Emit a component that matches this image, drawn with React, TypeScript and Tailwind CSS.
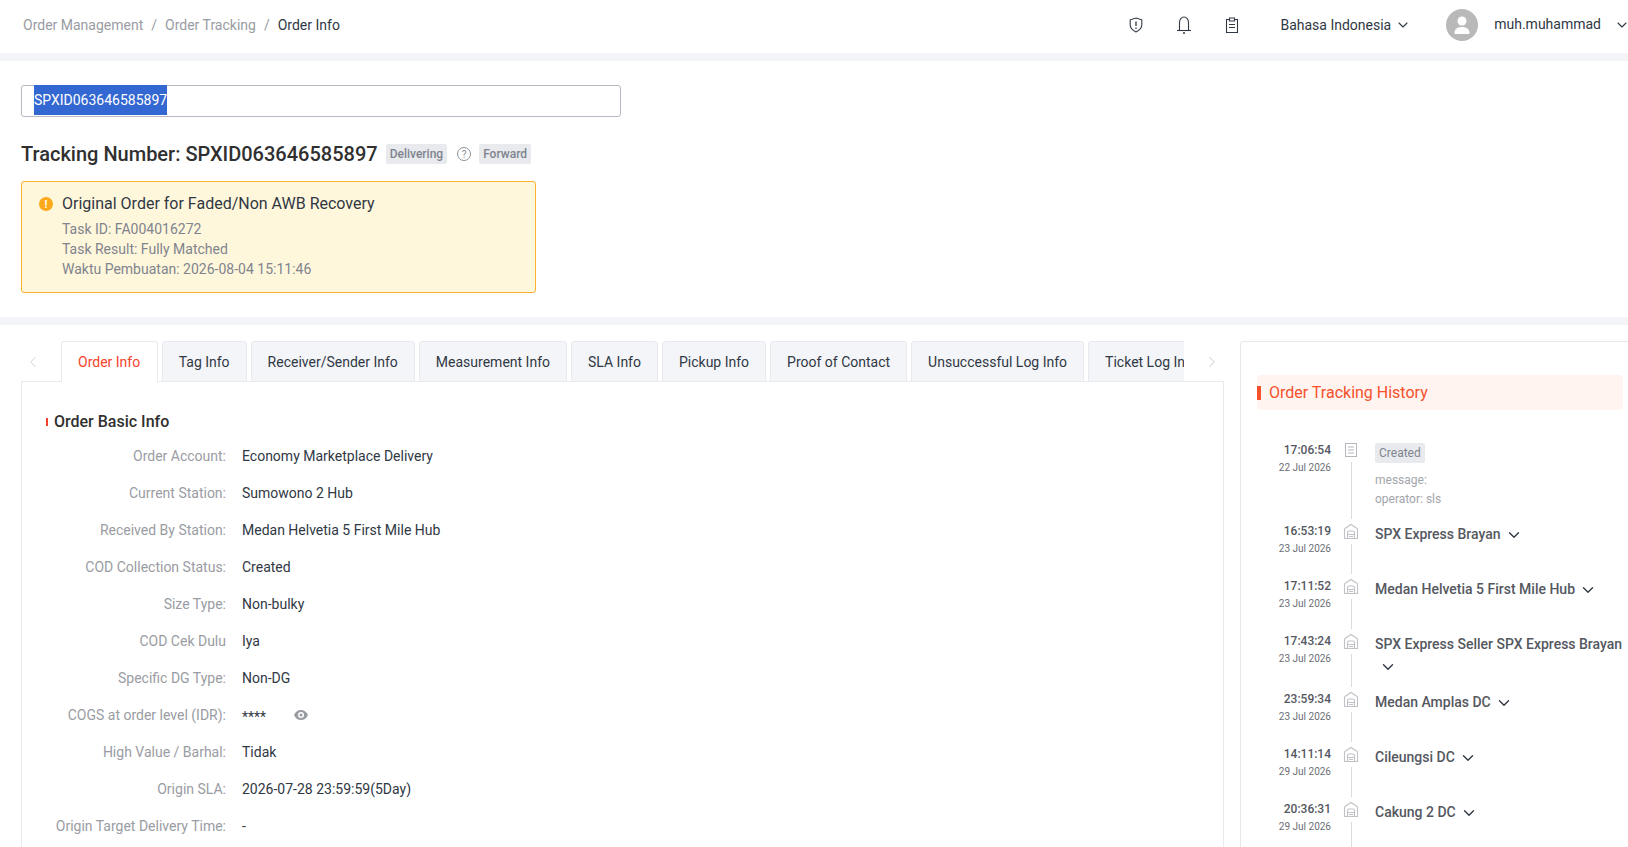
import React from "react";
import { ChevronDown, ChevronLeft, ChevronRight } from "lucide-react";

const tabs = [
  "Tag Info",
  "Receiver/Sender Info",
  "Measurement Info",
  "SLA Info",
  "Pickup Info",
  "Proof of Contact",
  "Unsuccessful Log Info",
  "Ticket Log Info",
];

const basicInfo = [
  ["Order Account:", "Economy Marketplace Delivery"],
  ["Current Station:", "Sumowono 2 Hub"],
  ["Received By Station:", "Medan Helvetia 5 First Mile Hub"],
  ["COD Collection Status:", "Created"],
  ["Size Type:", "Non-bulky"],
  ["COD Cek Dulu", "Iya"],
  ["Specific DG Type:", "Non-DG"],
  ["COGS at order level (IDR):", "****"],
  ["High Value / Barhal:", "Tidak"],
  ["Origin SLA:", "2026-07-28 23:59:59(5Day)"],
  ["Origin Target Delivery Time:", "-"],
];

const history = [
  { time: "16:53:19", date: "23 Jul 2026", name: "SPX Express Brayan", rowClass: "h-[55px]" },
  { time: "17:11:52", date: "23 Jul 2026", name: "Medan Helvetia 5 First Mile Hub", rowClass: "h-[55px]" },
  { time: "17:43:24", date: "23 Jul 2026", name: "SPX Express Seller SPX Express Brayan", rowClass: "h-[58px]" },
  { time: "23:59:34", date: "23 Jul 2026", name: "Medan Amplas DC", rowClass: "h-[55px]" },
  { time: "14:11:14", date: "29 Jul 2026", name: "Cileungsi DC", rowClass: "h-[55px]" },
  { time: "20:36:31", date: "29 Jul 2026", name: "Cakung 2 DC", rowClass: "h-[55px]" },
];

const ShieldIcon = () => (
  <svg width="14" height="16" viewBox="0 0 14 16" fill="none" stroke="#303844" strokeWidth="1.100">
    <path d="M7 1l5.800 1.800v5c0 3.200-2.500 5.600-5.800 7.200-3.300-1.600-5.800-4-5.800-7.200v-5z" />
    <path d="M7 4.500v4.500M7 10.500v1.500" strokeWidth="1.300" />
  </svg>
);

const BellIcon = () => (
  <svg width="16" height="18" viewBox="0 0 16 18" fill="none" stroke="#303844" strokeWidth="1.100" className="ml-[33px]">
    <path d="M3.500 14V6.500C3.500 3.500 5.500 1 8 1s4.500 2.500 4.500 5.500V14" />
    <path d="M1 14.500h14" />
    <path d="M7 17h2" strokeWidth="1.500" />
  </svg>
);

const ClipboardIcon = () => (
  <svg width="14" height="16" viewBox="0 0 14 16" fill="none" stroke="#303844" strokeWidth="1.100" className="ml-[33px]">
    <path d="M4.500 2.500h-3v13h11v-13h-3" />
    <path d="M4.500 1h5v3h-5z" />
    <path d="M4 7.500h6M4 10.500h6" />
  </svg>
);

const HubIcon = () => (
  <svg width="16" height="17" viewBox="0 0 16 17" fill="none" stroke="#c0c2c7" strokeWidth="1.100">
    <path d="M1.500 15.500V6.500c0-.6.200-1 .7-1.300L8 1.500l5.800 3.700c.5.300.7.700.7 1.300v9z" />
    <path d="M4.500 15.500V9.500C4.500 8.400 5 8 6 8h4c1 0 1.500.4 1.500 1.500v6" />
    <path d="M4.500 11.500h7M6 13.500h4" />
  </svg>
);

const DocIcon = () => (
  <svg width="14" height="16" viewBox="0 0 14 16" fill="none" stroke="#b5b7bc" strokeWidth="1">
    <rect x="1.500" y="1.500" width="11" height="13" />
    <path d="M4 5h6M4 8h6M4 11h6" />
  </svg>
);

const Tag = ({ children }: { children: React.ReactNode }) => (
  <span className="inline-flex h-[20px] -translate-y-px items-center rounded-[2px] bg-[#e8eaed] px-1 text-xs font-medium text-[#80848f]">
    {children}
  </span>
);

export default function App() {
  return (
    <div className="flex h-[847px] w-[1628px] flex-col overflow-hidden bg-white font-['Roboto',sans-serif] text-sm text-[#303844]">
      {/* top bar */}
      <header className="flex h-[53px] shrink-0 items-center pb-1 pl-[23px]">
        <nav className="flex gap-2 text-[#999ca3]">
          <span>Order Management</span>
          <span>/</span>
          <span>Order Tracking</span>
          <span>/</span>
          <span className="text-[#303844]">Order Info</span>
        </nav>
        <div className="ml-auto flex items-center">
          <ShieldIcon />
          <BellIcon />
          <ClipboardIcon />
          <span className="ml-[41px]">Bahasa Indonesia</span>
          <ChevronDown size={16} strokeWidth={1.6} className="ml-1" />
          <span className="ml-[35px] flex h-8 w-8 items-center justify-center rounded-full bg-[#b9b9b9]">
            <svg width="18" height="20" viewBox="0 0 18 20" fill="white">
              <circle cx="9" cy="6" r="4.500" />
              <path d="M1.500 18c0-4 3-6 7.500-6s7.500 2 7.500 6c0 .6-.4 1-1 1h-13c-.6 0-1-.4-1-1z" />
            </svg>
          </span>
          <span className="ml-[16px] -translate-y-px">muh.muhammad</span>
          <ChevronDown size={16} strokeWidth={1.6} className="ml-[13px] -mr-[2px]" />
        </div>
      </header>
      <div className="h-2 shrink-0 bg-[#f4f5f9]" />

      {/* search + summary */}
      <section className="h-[256px] shrink-0 pl-[21px] pt-6">
        <div className="flex h-8 w-[600px] items-center rounded-[3px] border border-[#b6b9c4] px-3">
          <span className="-translate-y-px bg-[#3367d1] leading-[30px] text-white">SPXID063646585897</span>
        </div>
        <div className="mt-[25px] flex h-6 items-center">
          <h1 className="text-xl leading-6 font-medium text-[#303030]">Tracking Number: SPXID063646585897</h1>
          <span className="ml-[8px]"><Tag>Delivering</Tag></span>
          <svg width="14" height="14" viewBox="0 0 14 14" fill="none" stroke="#8d9096" className="ml-[10px]">
            <circle cx="7" cy="7" r="6.500" />
            <text x="7" y="10.500" textAnchor="middle" fontSize="10" fill="#8d9096" stroke="none">?</text>
          </svg>
          <span className="ml-[8px]"><Tag>Forward</Tag></span>
        </div>
        <div className="mt-[15px] h-[112px] w-[515px] rounded-[3px] border border-[#fbb02d] bg-[#fff7db] pt-[10px] pl-[17px]">
          <div className="flex items-center">
            <span className="flex h-3.5 w-3.5 items-center justify-center rounded-full bg-[#fcaa1b] text-[11px] leading-none font-bold text-white">
              !
            </span>
            <span className="ml-[9px] text-base leading-6 text-[#303844]">Original Order for Faded/Non AWB Recovery</span>
          </div>
          <div className="mt-[3px] ml-[23px] leading-5 text-[#80848f]">
            <p>Task ID: FA004016272</p>
            <p>Task Result: Fully Matched</p>
            <p>Waktu Pembuatan: 2026-08-04 15:11:46</p>
          </div>
        </div>
      </section>
      <div className="h-2 shrink-0 bg-[#f4f5f9]" />

      {/* details */}
      <div className="flex min-h-0 flex-1 pt-4 pl-[21px]">
        <div className="w-[1203px] shrink-0">
          <div className="relative z-10 flex h-[41px] items-stretch">
            <div className="flex w-[40px] items-center pl-[3px] text-[#d0d2d7]">
              <ChevronLeft size={18} strokeWidth={1.3} />
            </div>
            <div className="flex w-[1123px] gap-1 overflow-hidden">
              <div className="flex shrink-0 items-center rounded-t-[3px] border border-b-0 border-[#e8eaf0] bg-white pr-[16.5px] pl-4 text-[#f5432b]">
                Order Info
              </div>
              {tabs.map((t) => (
                <div
                  key={t}
                  className="flex h-[41px] shrink-0 items-center rounded-t-[3px] border border-[#e8eaf0] bg-[#f4f5f9] px-4 whitespace-nowrap"
                >
                  {t}
                </div>
              ))}
            </div>
            <div className="flex flex-1 items-center justify-center pl-4 text-[#c6c8cd]">
              <ChevronRight size={18} strokeWidth={1.3} />
            </div>
          </div>
          <div className="-mt-px h-[500px] border border-[#e8eaf0] pt-[25px]">
            <div className="flex h-[30px] items-center pl-6">
              <span className="h-2 w-0.5 bg-[#f5432b]" />
              <h2 className="ml-[6px] text-base font-medium text-[#303030]">Order Basic Info</h2>
            </div>
            {basicInfo.map(([label, value]) => (
              <div key={label} className="flex h-[37px] items-center">
                <span className="w-[204px] text-right text-[#9a9ca3]">{label}</span>
                <span className="ml-4 flex items-center">
                  {value === "****" ? <span className="translate-y-0.5">{value}</span> : value}
                  {value === "****" && (
                    <svg width="14" height="10" viewBox="0 0 14 10" className="ml-7" fill="#9a9ca3">
                      <path
                        fillRule="evenodd"
                        d="M7 0C3.800 0 1.200 2 0 5c1.200 3 3.800 5 7 5s5.800-2 7-5c-1.200-3-3.800-5-7-5zm0 8a3 3 0 110-6 3 3 0 010 6zm0-1.500a1.500 1.500 0 100-3 1.500 1.500 0 000 3z"
                      />
                    </svg>
                  )}
                </span>
              </div>
            ))}
          </div>
        </div>

        {/* tracking history */}
        <aside className="ml-4 h-[600px] w-[420px] shrink-0 rounded-[3px] border border-[#e8e8e8] pt-[33px] pl-[16px]">
          <div className="flex h-[35px] w-[366px] items-center rounded-[4px] bg-[#fff4f0] text-base text-[#f5512b]">
            <span className="h-3.5 w-1 bg-[#f5512b]" />
            <span className="ml-2">Order Tracking History</span>
          </div>
          <div className="mt-8">
            <div className="flex h-[81px]">
              <div className="w-[74px] text-right">
                <p className="text-xs leading-4 font-medium text-[#55585f]">17:06:54</p>
                <p className="mt-1 text-[10px] leading-3 text-[#6b6e75]">22 Jul 2026</p>
              </div>
              <div className="flex w-[40px] flex-col items-center">
                <DocIcon />
                <span className="mt-1 mb-1 w-px flex-1 bg-[#dcdcdc]" />
              </div>
              <div className="ml-1">
                <span className="inline-flex h-5 items-center rounded-[2px] bg-[#e8eaed] px-1 text-xs text-[#80848f]">Created</span>
                <p className="mt-2 text-xs leading-[19px] text-[#a3a5ab]">message:</p>
                <p className="text-xs leading-[19px] text-[#a3a5ab]">operator: sls</p>
              </div>
            </div>
            {history.map((h) => (
              <div key={h.time} className={`flex ${h.rowClass}`}>
                <div className="w-[74px] text-right">
                  <p className="text-xs leading-4 font-medium text-[#55585f]">{h.time}</p>
                  <p className="mt-1 text-[10px] leading-3 text-[#6b6e75]">{h.date}</p>
                </div>
                <div className="flex w-[40px] flex-col items-center">
                  <HubIcon />
                  <span className="mt-1 mb-1 w-px flex-1 bg-[#dcdcdc]" />
                </div>
                <div className="ml-1 w-[248px] text-sm leading-[22px] font-medium text-[#55585f]">
                  {h.name}
                  <ChevronDown size={18} strokeWidth={1.8} className="ml-1 inline text-[#303844]" />
                </div>
              </div>
            ))}
          </div>
        </aside>
      </div>
    </div>
  );
}
